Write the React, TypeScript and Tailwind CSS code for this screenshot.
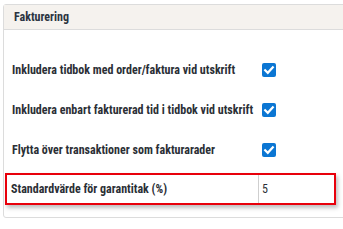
import React from 'react';

const font = { fontFamily: '"Liberation Sans Narrow", "Roboto Condensed", "DejaVu Sans Condensed", sans-serif' };

function Check() {
  return (
    <span className="flex h-[14px] w-[14px] shrink-0 items-center justify-center rounded-[2px] bg-[#0b76d3]">
      <svg viewBox="0 0 14 14" className="h-[14px] w-[14px]">
        <path d="M3.2 7.3 L5.8 9.8 L10.8 4.3" fill="none" stroke="white" strokeWidth="2.2" strokeLinecap="square" />
      </svg>
    </span>
  );
}

const rows = [
  'Inkludera tidbok med order/faktura vid utskrift',
  'Inkludera enbart fakturerad tid i tidbok vid utskrift',
  'Flytta över transaktioner som fakturarader',
];

export default function App() {
  return (
    <div className="h-[229px] w-[343px] overflow-hidden bg-white pl-[3px] pt-[4px]" style={font}>
      <div className="w-[370px] rounded-[3px] border border-[#dcdcdc]">
        {/* Header */}
        <div className="flex h-[25px] items-center border-b border-[#dcdcdc] bg-[#f5f2ee] pl-[10px] text-[12px] font-bold text-[#2b3441]">
          Fakturering
        </div>

        {/* Body */}
        <div className="pt-[20px] pb-[12px]">
          {rows.map((r) => (
            <div key={r} className="flex h-[40px] items-center">
              <div className="w-[258px] shrink-0 whitespace-nowrap pl-[8px] text-[12px] font-bold text-[#2b2f36]">{r}</div>
              <Check />
            </div>
          ))}

          <div className="mt-[3px] ml-[1px] flex h-[32px] w-[331px] items-stretch border-2 border-[#e8000b] shadow-[2px_3px_4px_rgba(0,0,0,0.25)]">
            <div className="flex w-[252px] items-center whitespace-nowrap border-r border-[#cfcfcf] pl-[4px] text-[12px] font-bold text-[#2b2f36]">
              Standardvärde för garantitak (%)
            </div>
            <div className="flex items-center pl-[3px] text-[12px] text-[#2b2f36]">5</div>
          </div>
        </div>
      </div>
    </div>
  );
}
